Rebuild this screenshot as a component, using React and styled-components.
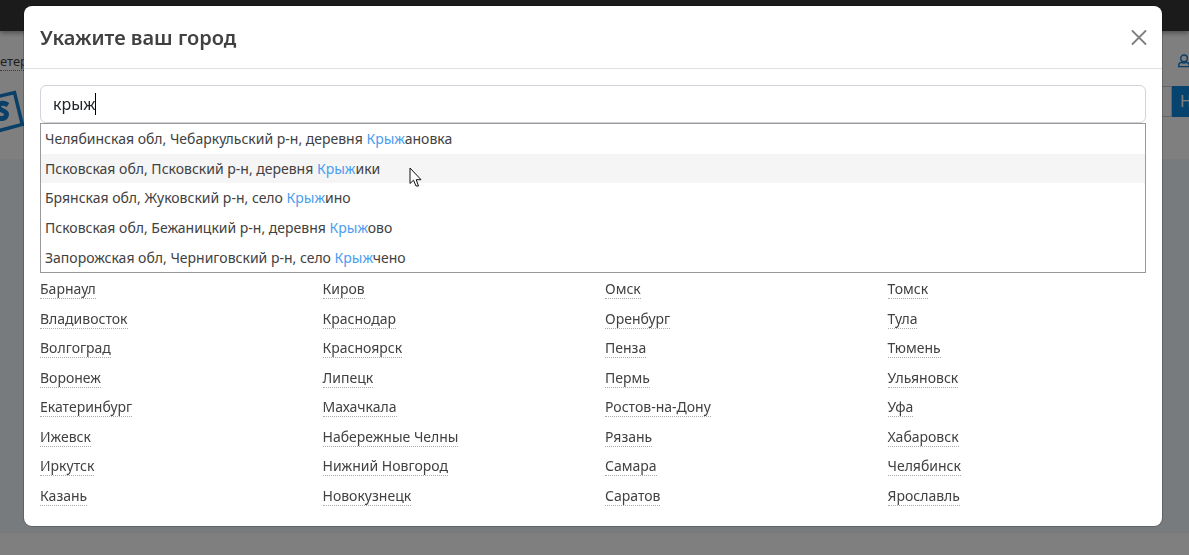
import { useState } from "react";
import styled, { createGlobalStyle } from "styled-components";

const cityColumns = [
    ["Барнаул", "Владивосток", "Волгоград", "Воронеж", "Екатеринбург", "Ижевск", "Иркутск", "Казань"],
    ["Киров", "Краснодар", "Красноярск", "Липецк", "Махачкала", "Набережные Челны", "Нижний Новгород", "Новокузнецк"],
    ["Омск", "Оренбург", "Пенза", "Пермь", "Ростов-на-Дону", "Рязань", "Самара", "Саратов"],
    ["Томск", "Тула", "Тюмень", "Ульяновск", "Уфа", "Хабаровск", "Челябинск", "Ярославль"],
];

const suggestions = [
    { region: "Челябинская обл, Чебаркульский р-н, деревня ", match: "Крыж", rest: "ановка" },
    { region: "Псковская обл, Псковский р-н, деревня ", match: "Крыж", rest: "ики" },
    { region: "Брянская обл, Жуковский р-н, село ", match: "Крыж", rest: "ино" },
    { region: "Псковская обл, Бежаницкий р-н, деревня ", match: "Крыж", rest: "ово" },
    { region: "Запорожская обл, Черниговский р-н, село ", match: "Крыж", rest: "чено" },
];

const Site = () => (
    <SSite>
        <div className="topbar"></div>
        <header>
            <div className="header__row">
                <a className="header__city" href="#city">етер</a>
                <a className="header__user" href="#login" aria-label="Войти">
                    <svg width="12" height="14" viewBox="0 0 12 14" fill="none" stroke="currentColor" strokeWidth="1.4">
                        <circle cx="6" cy="4.300" r="3.300" />
                        <path d="M3.800 8.200C1.800 8.400 .7 9.800 .7 11.400V12.600H11.300V11.400C11.300 9.800 10.200 8.400 8.200 8.200C7 9 5 9 3.800 8.200Z" />
                    </svg>
                </a>
            </div>
            <div className="header__row header__row--search">
                <a className="header__logo" href="#home" aria-label="На главную">
                    <svg width="24" height="48" viewBox="0 0 24 48" fill="none" stroke="#1480cf">
                        <path d="M-4 10L14.500 5.500L22.300 37.500L-4 44.500" strokeWidth="3.500" />
                        <path d="M8 18C4 15.500-1 15.500-1.500 19.500C-2 24 7 23 6.500 27.500C6 32.500 0 32-4 30.500" strokeWidth="5" />
                    </svg>
                </a>
                <div className="header__search"></div>
                <button className="header__find" type="button">Н</button>
            </div>
        </header>
        <main></main>
    </SSite>
);

const CitySearch = () => {
    const [query, setQuery] = useState("крыж");
    const [active, setActive] = useState(1);

    return (
        <SSearch>
            <div className="field">
                <input
                    type="text"
                    aria-label="Город"
                    autoComplete="off"
                    value={query}
                    onChange={(e) => setQuery(e.target.value)} />
                {query === "крыж" && <i className="field__caret"></i>}
            </div>
            <ul>
                {suggestions.map((item, index) => (
                    <SSuggestion key={item.region} $active={index === active} onMouseEnter={() => setActive(index)}>
                        <button type="button">{item.region}<mark>{item.match}</mark>{item.rest}</button>
                        {index === active &&
                            <svg width="13" height="20" viewBox="0 0 13 20">
                                <path d="M1 1V16.500L4.500 13.200L7 19H9.500L7.200 12.700H12Z" fill="#fff" stroke="#111" strokeWidth="1" />
                            </svg>}
                    </SSuggestion>
                ))}
            </ul>
        </SSearch>
    );
};

const App = () => {
    return (
        <>
            <GlobalStyle />
            <Site />
            <SBackdrop>
                <SModal role="dialog" aria-labelledby="city-title">
                    <SModalHeader>
                        <h5 id="city-title">Укажите ваш город</h5>
                        <button type="button" aria-label="Закрыть">
                            <svg width="16" height="16" viewBox="0 0 16 16" fill="none" stroke="currentColor" strokeWidth="1.800" strokeLinecap="round">
                                <path d="M1.500 1L14.500 14M14.500 1L1.500 14" />
                            </svg>
                        </button>
                    </SModalHeader>
                    <SModalBody>
                        <CitySearch />
                        <SCities>
                            {cityColumns.map((column) => (
                                <ul key={column[0]}>
                                    {column.map((city) => (
                                        <li key={city}><a href="#city">{city}</a></li>
                                    ))}
                                </ul>
                            ))}
                        </SCities>
                    </SModalBody>
                </SModal>
            </SBackdrop>
        </>
    );
};

const GlobalStyle = createGlobalStyle`
    * {
        box-sizing: border-box;
    }

    body {
        margin: 0;
        overflow: hidden;
        color: #414141;
        font-family: "Noto Sans", "Open Sans", sans-serif;
        font-size: 14px;
        line-height: 22px;
    }

    ul {
        margin: 0;
        padding: 0;
        list-style: none;
    }

    button, input {
        font: inherit;
        color: inherit;
    }
`

const SSite = styled.div`
    display: flex;
    flex-direction: column;
    height: 100vh;
    padding-bottom: 22px;
    background-color: #fff;

    .topbar {
        height: 31px;
        flex-shrink: 0;
        background-color: #363636;
        box-shadow: 0 2px 5px rgba(0, 0, 0, 0.4);
    }

    header {
        flex-shrink: 0;
        padding: 20px 0 28px;
    }

    .header__row {
        display: flex;
        justify-content: space-between;
        align-items: center;
        height: 20px;
    }

    .header__row--search {
        height: 60px;
    }

    .header__city {
        color: #414141;
        font-size: 13px;
        line-height: 18px;
        text-decoration: none;
        border-bottom: 1px dotted #777;
    }

    .header__user {
        display: flex;
        margin-right: -1px;
        color: #1480cf;
    }

    .header__logo {
        display: flex;
        margin-top: 20px;
    }

    .header__search {
        flex: 1;
        height: 31px;
        border: 1px solid #ccc;
        border-left: none;
    }

    .header__find {
        width: 17px;
        height: 31px;
        padding: 0 0 0 8px;
        overflow: hidden;
        border: none;
        background-color: #0d87dd;
        color: #fff;
        font-size: 16px;
        text-align: left;
    }

    main {
        flex: 1;
        background-color: #f0f7fd;
    }
`

const SBackdrop = styled.div`
    position: fixed;
    inset: 0;
    overflow: auto;
    padding: 6px 27px 0 24px;
    background-color: rgba(0, 0, 0, 0.5);
`

const SModal = styled.div`
    display: flex;
    flex-direction: column;
    min-height: calc(100vh - 35px);
    border-radius: 8px;
    background-color: #fff;
    box-shadow: 0 0 0 1px rgba(0, 0, 0, 0.2);
`

const SModalHeader = styled.div`
    display: flex;
    justify-content: space-between;
    align-items: center;
    padding: 17px 15px 15px 16px;
    border-bottom: 1px solid #dee2e6;

    h5 {
        margin: 0;
        font-size: 20px;
        font-weight: 600;
        line-height: 30px;
    }

    button {
        display: flex;
        padding: 0;
        border: none;
        background: none;
        color: #7f7f7f;
        cursor: pointer;
    }
`

const SModalBody = styled.div`
    display: flex;
    flex-direction: column;
    flex: 1;
    padding: 16px 16px 19px;
`

const SSearch = styled.div`
    .field {
        position: relative;
    }

    .field__caret {
        position: absolute;
        top: 8px;
        left: 55px;
        width: 1px;
        height: 22px;
        background-color: #000;
    }

    input {
        display: block;
        width: 100%;
        height: 38px;
        padding: 6px 12px;
        border: 1px solid #ced4da;
        border-radius: 6px;
        outline: none;
        background-color: #fff;
        color: #212529;
        font-size: 16px;
        line-height: 24px;
    }

    ul {
        display: grid;
        grid-auto-rows: 1fr;
        min-height: 150px;
        border: 1px solid #999;
        background-color: #fff;
    }
`

const SSuggestion = styled.li`
    position: relative;
    z-index: ${(props) => props.$active ? 1 : 0};
    display: flex;
    align-items: center;
    background-color: ${(props) => props.$active ? "#f5f5f5" : "#fff"};

    button {
        flex: 1;
        padding: 1px 4px 0;
        border: none;
        background: none;
        text-align: left;
        cursor: default;
    }

    mark {
        background: none;
        color: #4a9df0;
    }

    svg {
        position: absolute;
        top: 13px;
        left: 368px;
        pointer-events: none;
    }
`

const SCities = styled.div`
    display: grid;
    grid-template-columns: repeat(4, 1fr);
    column-gap: 24px;
    flex: 1;
    padding-top: 5px;

    ul {
        display: flex;
        flex-direction: column;
        justify-content: space-between;
    }

    a {
        color: inherit;
        text-decoration: none;
        border-bottom: 1px dotted #aaa;
    }
`

export default App;
